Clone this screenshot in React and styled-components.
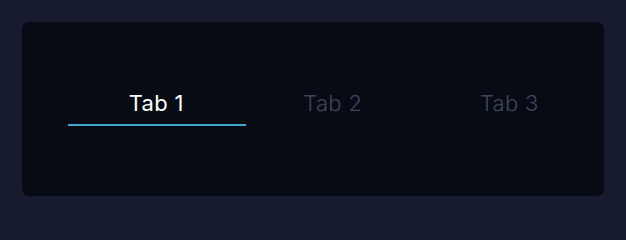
import * as React from "react"
import styled, { createGlobalStyle } from "styled-components"

const GlobalStyle = createGlobalStyle`
  html, body {
    margin: 0;
    padding: 0;
    background: #161b2f;
  }
  body {
    font-family: "Inter", "Lato", "DejaVu Sans", sans-serif;
  }
`

const Page = styled.div`
  width: 626px;
  height: 219px;
  box-sizing: border-box;
  padding: 22px 22px 23px 22px;
  display: flex;
`

const Card = styled.div`
  flex: 1;
  min-width: 0;
  display: flex;
  align-items: center;
  padding: 0 0 0 46px;
  border-radius: 7px;
  background: #070b14;
`

const TabList = styled.div`
  display: grid;
  grid-template-columns: repeat(3, 176.5px);
  margin-top: -2px;
`

const Tab = styled.button`
  position: relative;
  background: none;
  border: 0;
  padding: 0 0 10px;
  font-family: inherit;
  font-size: 22px;
  letter-spacing: 0.3px;
  line-height: 26px;
  cursor: pointer;
  color: ${({ active }) => (active ? "#ffffff" : "#3f475e")};
  font-weight: ${({ active }) => (active ? 400 : 300)};

  &::after {
    content: "";
    position: absolute;
    left: 0;
    right: -1px;
    bottom: 0;
    height: 2px;
    background: ${({ active }) => (active ? "#3ba7d3" : "transparent")};
  }
`

const tabs = ["Tab 1", "Tab 2", "Tab 3"]

export default function App() {
  const [current, setCurrent] = React.useState(0)

  return (
    <>
      <GlobalStyle />
      <Page>
        <Card>
          <TabList>
            {tabs.map((label, i) => (
              <Tab key={label} active={i === current} onClick={() => setCurrent(i)}>
                {label}
              </Tab>
            ))}
          </TabList>
        </Card>
      </Page>
    </>
  )
}
